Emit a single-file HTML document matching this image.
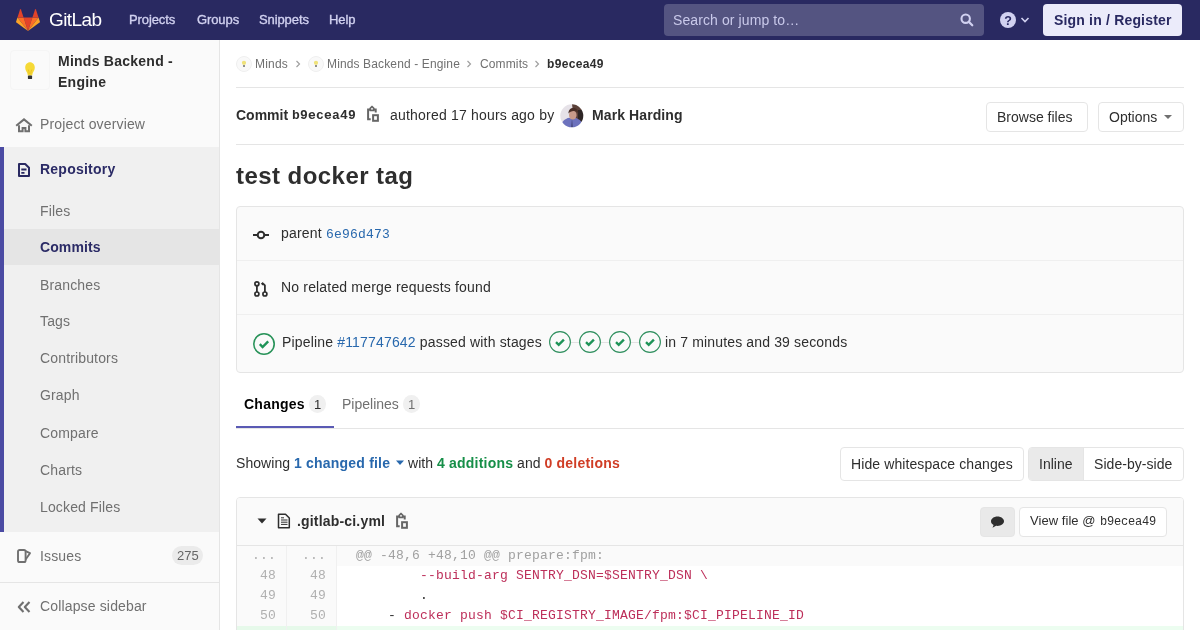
<!DOCTYPE html>
<html><head><meta charset="utf-8">
<style>
*{box-sizing:border-box;margin:0;padding:0}
html,body{width:1200px;height:630px;overflow:hidden;background:#fff;-webkit-font-smoothing:antialiased;font-family:"Liberation Sans",sans-serif;font-size:14px;color:#2e2e2e}
.t{position:absolute;white-space:nowrap;line-height:16px}
.mono{font-family:"Liberation Mono",monospace}
.b{font-weight:bold}
#nav{position:absolute;left:0;top:0;width:1200px;height:40px;background:#292961}
#side{position:absolute;left:0;top:40px;width:220px;height:590px;background:#fafafa;border-right:1px solid #e5e5e5}
#repo{position:absolute;left:0;top:107px;width:219px;height:385px;background:#f0f0f0;border-left:4px solid #4b4ba3}
.s-item{position:absolute;left:40px;font-size:14px;line-height:16px;color:#707070;white-space:nowrap;letter-spacing:0.15px}
.btn{position:absolute;border:1px solid #e5e5e5;border-radius:4px;background:#fff}
.box{position:absolute;border:1px solid #e5e5e5;border-radius:4px;background:#fafafa}
.hr{position:absolute;height:1px;background:#e5e5e5}
.ln{position:absolute;width:50px;text-align:right;padding-right:10px;font-family:"Liberation Mono",monospace;font-size:13px;line-height:20px;color:#b0b0b0;letter-spacing:0.2px}
.code{position:absolute;font-family:"Liberation Mono",monospace;font-size:13px;line-height:20px;white-space:pre;letter-spacing:0.2px}
</style></head><body><div id="root" style="position:absolute;left:0;top:0;width:1200px;height:630px;will-change:transform;opacity:0.999">
<!-- NAVBAR -->
<div id="nav">
  <svg style="position:absolute;left:16px;top:9px" width="24" height="22" viewBox="0 0 36 33">
    <path fill="#e24329" d="M18 33 24.6 12.7H11.4z"/>
    <path fill="#fc6d26" d="M18 33 11.4 12.7H2.2z"/>
    <path fill="#fca326" d="M2.2 12.7.2 18.9a1.4 1.4 0 0 0 .5 1.5L18 33z"/>
    <path fill="#e24329" d="M2.2 12.7h9.2L7.4.6a.7.7 0 0 0-1.3 0z"/>
    <path fill="#fc6d26" d="M18 33 24.6 12.7h9.2z"/>
    <path fill="#fca326" d="M33.8 12.7l2 6.2a1.4 1.4 0 0 1-.5 1.5L18 33z"/>
    <path fill="#e24329" d="M33.8 12.7h-9.2L28.6.6a.7.7 0 0 1 1.3 0z"/>
  </svg>
  <div class="t" style="left:49px;top:7.5px;font-size:19px;line-height:24px;color:#fff;letter-spacing:-0.6px">GitLab</div>
  <div class="t" style="left:129px;top:12px;font-size:13px;line-height:16px;color:#d1d1f0;-webkit-text-stroke:0.35px #d1d1f0;letter-spacing:-0.1px">Projects</div>
  <div class="t" style="left:197px;top:12px;font-size:13px;line-height:16px;color:#d1d1f0;-webkit-text-stroke:0.35px #d1d1f0;letter-spacing:-0.1px">Groups</div>
  <div class="t" style="left:259px;top:12px;font-size:13px;line-height:16px;color:#d1d1f0;-webkit-text-stroke:0.35px #d1d1f0;letter-spacing:-0.1px">Snippets</div>
  <div class="t" style="left:329px;top:12px;font-size:13px;line-height:16px;color:#d1d1f0;-webkit-text-stroke:0.35px #d1d1f0;letter-spacing:-0.1px">Help</div>
  <div style="position:absolute;left:664px;top:4px;width:320px;height:32px;border-radius:4px;background:#545481">
    <div class="t" style="left:9px;top:8px;color:#c9c9ea;letter-spacing:0.1px">Search or jump to…</div>
    <svg style="position:absolute;left:296px;top:9px" width="14" height="14" viewBox="0 0 16 16"><circle cx="6.5" cy="6.5" r="4.8" fill="none" stroke="#d1d1f0" stroke-width="2.4"/><path d="M10 10l4 4" stroke="#d1d1f0" stroke-width="2.6" stroke-linecap="round"/></svg>
  </div>
  <svg style="position:absolute;left:1000px;top:12px" width="16" height="16" viewBox="0 0 16 16"><circle cx="8" cy="8" r="8" fill="#d1d1f0"/><text x="8" y="12.6" font-size="12.5" font-weight="bold" text-anchor="middle" fill="#292961" font-family="Liberation Sans">?</text></svg>
  <svg style="position:absolute;left:1020px;top:16px" width="10" height="8" viewBox="0 0 10 8"><path d="M1.5 2l3.5 3.5L8.5 2" fill="none" stroke="#d1d1f0" stroke-width="1.6"/></svg>
  <div style="position:absolute;left:1043px;top:4px;width:139px;height:32px;border-radius:4px;background:#ebebfa"></div>
  <div class="t b" style="left:1054px;top:12px;color:#292961;letter-spacing:0.18px">Sign in / Register</div>
</div>

<!-- SIDEBAR -->
<div id="side">
  <div style="position:absolute;left:10px;top:10px;width:40px;height:40px;border:1px solid #f5f5f5;border-radius:4px;background:#fafafa"></div>
  <svg style="position:absolute;left:22px;top:21px" width="16" height="20" viewBox="0 0 16 20">
    <path d="M8 1.2C5.2 1.2 3.2 3.5 3.2 6.5c0 2.4 1.3 3.8 1.9 5.2.4.9.6 1.8.6 2.8h4.6c0-1 .2-1.9.6-2.8.6-1.4 1.9-2.8 1.9-5.2 0-3-2-5.3-4.8-5.3z" fill="#f6d936"/>
    <path d="M6.2 8.5c.6 1.5 1 2.8 1 4.5M9.8 8.5c-.6 1.5-1 2.8-1 4.5" fill="none" stroke="#e8b81e" stroke-width=".7"/>
    <rect x="5.9" y="14.5" width="4.2" height="3.6" rx=".9" fill="#333"/>
  </svg>
  <div class="t b" style="left:58px;top:10.5px;line-height:21px;color:#2e2e2e;letter-spacing:0.25px">Minds Backend -<br>Engine</div>

  <svg style="position:absolute;left:15px;top:78px" width="18" height="15" viewBox="0 0 18 15"><path d="M4 7.2V13.2h3.6V10h2.8v3.2H14V7.2" fill="none" stroke="#707070" stroke-width="2" stroke-linejoin="miter"/><path d="M1.2 7.8 9 1.4l7.8 6.4" fill="none" stroke="#707070" stroke-width="2" stroke-linejoin="miter"/></svg>
  <div class="s-item" style="top:76px">Project overview</div>

  <div id="repo"></div>
  <svg style="position:absolute;left:17px;top:123px" width="14" height="14" viewBox="0 0 14 14"><path d="M2 1h6.2L12 4.8V13H2z" fill="none" stroke="#292961" stroke-width="2" stroke-linejoin="round"/><path d="M4.3 6.5h5.2M4.3 9.8h3.2" stroke="#292961" stroke-width="1.8"/></svg>
  <div class="s-item b" style="top:120.5px;color:#2b2b66;letter-spacing:0.23px">Repository</div>
  <div style="position:absolute;left:4px;top:189px;width:215px;height:36px;background:#e5e5e5"></div>
  <div class="s-item" style="top:163px">Files</div>
  <div class="s-item b" style="top:198.5px;color:#2b2b66;letter-spacing:0.1px">Commits</div>
  <div class="s-item" style="top:236.5px">Branches</div>
  <div class="s-item" style="top:273px">Tags</div>
  <div class="s-item" style="top:310px">Contributors</div>
  <div class="s-item" style="top:347px">Graph</div>
  <div class="s-item" style="top:384.5px">Compare</div>
  <div class="s-item" style="top:422px">Charts</div>
  <div class="s-item" style="top:459px">Locked Files</div>

  <svg style="position:absolute;left:16px;top:509px" width="16" height="14" viewBox="0 0 16 14"><rect x="2" y="1" width="7.6" height="12" rx="1.6" fill="none" stroke="#707070" stroke-width="1.9"/><path d="M9.6 2.2 14 4.2 9.6 10.5" fill="none" stroke="#707070" stroke-width="1.9" stroke-linejoin="round"/></svg>
  <div class="s-item" style="top:508px">Issues</div>
  <div style="position:absolute;left:172px;top:506px;width:31px;height:19px;border-radius:10px;background:#ebebeb"></div>
  <div class="t" style="left:177px;top:508px;font-size:13px;line-height:15px;color:#666">275</div>

  <div class="hr" style="left:0;top:542px;width:219px"></div>
  <svg style="position:absolute;left:17px;top:561px" width="14" height="12" viewBox="0 0 14 12"><path d="M6.5 1 1.8 6l4.7 5M12.5 1 7.8 6l4.7 5" fill="none" stroke="#707070" stroke-width="2.1" stroke-linejoin="round"/></svg>
  <div class="s-item" style="top:558px">Collapse sidebar</div>
</div>

<!-- MAIN -->
<div id="main" style="position:absolute;left:0;top:0;width:1200px;height:630px">
  <!-- breadcrumbs -->
  <svg style="position:absolute;left:236px;top:56px" width="16" height="16" viewBox="0 0 16 16"><circle cx="8" cy="8" r="7.5" fill="#f9f9f9" stroke="#efefef" stroke-width="1"/><path d="M8 4.8c-1.3 0-2.1.9-2.1 2 0 .9.6 1.3.9 2h2.4c.3-.7.9-1.1.9-2 0-1.1-.8-2-2.1-2z" fill="#efe27a"/><rect x="7" y="9.2" width="2" height="1.6" fill="#777"/></svg>
  <div class="t" style="left:255px;top:57px;font-size:12px;line-height:14px;color:#707070;letter-spacing:0.2px">Minds</div>
  <svg style="position:absolute;left:295px;top:60px" width="6" height="8" viewBox="0 0 6 8"><path d="M1.5 1 4.5 4 1.5 7" fill="none" stroke="#a0a0a0" stroke-width="1.2"/></svg>
  <svg style="position:absolute;left:308px;top:56px" width="16" height="16" viewBox="0 0 16 16"><circle cx="8" cy="8" r="7.5" fill="#f9f9f9" stroke="#efefef" stroke-width="1"/><path d="M8 4.8c-1.3 0-2.1.9-2.1 2 0 .9.6 1.3.9 2h2.4c.3-.7.9-1.1.9-2 0-1.1-.8-2-2.1-2z" fill="#efe27a"/><rect x="7" y="9.2" width="2" height="1.6" fill="#777"/></svg>
  <div class="t" style="left:327px;top:57px;font-size:12px;line-height:14px;color:#707070;letter-spacing:0.13px">Minds Backend - Engine</div>
  <svg style="position:absolute;left:466px;top:60px" width="6" height="8" viewBox="0 0 6 8"><path d="M1.5 1 4.5 4 1.5 7" fill="none" stroke="#a0a0a0" stroke-width="1.2"/></svg>
  <div class="t" style="left:480px;top:57px;font-size:12px;line-height:14px;color:#707070;letter-spacing:0.13px">Commits</div>
  <svg style="position:absolute;left:534px;top:60px" width="6" height="8" viewBox="0 0 6 8"><path d="M1.5 1 4.5 4 1.5 7" fill="none" stroke="#a0a0a0" stroke-width="1.2"/></svg>
  <div class="t b" style="left:547px;top:57px;font-size:12px;line-height:14px;color:#2e2e2e;letter-spacing:0.35px">b9ecea49</div>
  <div class="hr" style="left:236px;top:87px;width:948px"></div>

  <!-- commit header -->
  <div class="t b" style="left:236px;top:107px">Commit</div>
  <div class="t b mono" style="left:292px;top:108px;font-size:13px;line-height:15px;letter-spacing:0.2px">b9ecea49</div>
  <svg style="position:absolute;left:362px;top:102px" width="22" height="24" viewBox="0 0 22 24"><path d="M8.7 17.3H6.1V7.6H8.2M11.8 7.6h1.9V10.4" fill="none" stroke="#666" stroke-width="2"/><path d="M8.2 8.4V6.3L10 4.5l1.8 1.8v2.1z" fill="none" stroke="#666" stroke-width="1.7" stroke-linejoin="round"/><rect x="11.1" y="13.2" width="4.8" height="5.6" fill="none" stroke="#666" stroke-width="2"/></svg>
  <div class="t" style="left:390px;top:107px;letter-spacing:0.2px">authored 17 hours ago by</div>
  <svg style="position:absolute;left:560px;top:104px" width="24" height="24" viewBox="0 0 24 24">
    <defs><clipPath id="av"><circle cx="11.8" cy="11.8" r="11.5"/></clipPath><filter id="bl" x="-10%" y="-10%" width="120%" height="120%"><feGaussianBlur stdDeviation="0.5"/></filter></defs>
    <g clip-path="url(#av)"><g filter="url(#bl)"><rect width="24" height="24" fill="#e6e2e8"/><path d="M12 0h12v24H15z" fill="#5a3f38"/><path d="M18 6h6v16h-6z" fill="#2e2628"/><ellipse cx="12" cy="22" rx="11" ry="8.5" fill="#6d72bd"/><path d="M12 14.5l.8 9.5h-1.6z" fill="#3c3f70"/><ellipse cx="12.8" cy="11" rx="3.8" ry="4.6" fill="#c79a8a"/><path d="M8.5 9.5c-.2-3.5 2-5.5 4.8-5.5 3 0 5 2 5 5.3-1-1.6-2.6-2.4-4.6-2.4-2.2 0-4 .9-5.2 2.6z" fill="#4a2f27"/></g></g>
  </svg>
  <div class="t b" style="left:592px;top:107px;letter-spacing:0.1px">Mark Harding</div>
  <div class="btn" style="left:986px;top:102px;width:102px;height:30px"></div>
  <div class="t" style="left:997px;top:109px">Browse files</div>
  <div class="btn" style="left:1098px;top:102px;width:86px;height:30px"></div>
  <div class="t" style="left:1109px;top:109px">Options</div>
  <svg style="position:absolute;left:1163px;top:114px" width="10" height="6" viewBox="0 0 10 6"><path d="M1 1h8L5 5z" fill="#707070"/></svg>
  <div class="hr" style="left:236px;top:144px;width:948px"></div>

  <!-- title -->
  <div class="t b" style="left:236px;top:162px;font-size:24px;line-height:28px;letter-spacing:0.45px">test docker tag</div>

  <!-- info box -->
  <div class="box" style="left:236px;top:206px;width:948px;height:167px"></div>
  <div class="hr" style="left:237px;top:260px;width:946px;background:#efefef"></div>
  <div class="hr" style="left:237px;top:314px;width:946px;background:#efefef"></div>
  <svg style="position:absolute;left:252px;top:228px" width="18" height="14" viewBox="0 0 18 14"><path d="M1 7h4.3M12.7 7H17" stroke="#2e2e2e" stroke-width="2"/><circle cx="9" cy="7" r="3.3" fill="none" stroke="#2e2e2e" stroke-width="2"/></svg>
  <div class="t" style="left:281px;top:225px;letter-spacing:0.2px">parent <span class="mono" style="font-size:13px;color:#2868ad;letter-spacing:0.2px">6e96d473</span></div>
  <svg style="position:absolute;left:248px;top:276px" width="26" height="26" viewBox="0 0 26 26"><circle cx="8.9" cy="7.8" r="2" fill="none" stroke="#2e2e2e" stroke-width="1.7"/><circle cx="8.9" cy="18" r="2" fill="none" stroke="#2e2e2e" stroke-width="1.7"/><circle cx="16.9" cy="18" r="2" fill="none" stroke="#2e2e2e" stroke-width="1.7"/><path d="M8.9 9.8v6.2M16.9 16V9.3L15.4 7.8H14" fill="none" stroke="#2e2e2e" stroke-width="1.8" stroke-linejoin="round"/><path d="M12.8 7.8l2.4-2v4z" fill="#2e2e2e"/></svg>
  <div class="t" style="left:281px;top:279px;letter-spacing:0.17px">No related merge requests found</div>
  <svg style="position:absolute;left:253px;top:333px" width="22" height="22" viewBox="0 0 22 22"><circle cx="11" cy="11" r="10.2" fill="none" stroke="#279258" stroke-width="1.6"/><path d="M6.8 11.2l2.8 2.8 5.6-5.6" fill="none" stroke="#1f9458" stroke-width="2.4"/></svg>
  <div class="t" style="left:282px;top:334px;letter-spacing:0.17px">Pipeline <span style="color:#2868ad">#117747642</span> passed with stages</div>
  <div style="position:absolute;left:568px;top:342px;width:74px;height:1px;background:#e2e2e2"></div>
  <svg style="position:absolute;left:549px;top:331px" width="22" height="22" viewBox="0 0 22 22"><circle cx="11" cy="11" r="10.4" fill="#fafafa" stroke="#2f8f5e" stroke-width="1.1"/><path d="M7 11.2l2.7 2.6 5.2-5.2" fill="none" stroke="#1f9458" stroke-width="2.4"/></svg>
  <svg style="position:absolute;left:579px;top:331px" width="22" height="22" viewBox="0 0 22 22"><circle cx="11" cy="11" r="10.4" fill="#fafafa" stroke="#2f8f5e" stroke-width="1.1"/><path d="M7 11.2l2.7 2.6 5.2-5.2" fill="none" stroke="#1f9458" stroke-width="2.4"/></svg>
  <svg style="position:absolute;left:609px;top:331px" width="22" height="22" viewBox="0 0 22 22"><circle cx="11" cy="11" r="10.4" fill="#fafafa" stroke="#2f8f5e" stroke-width="1.1"/><path d="M7 11.2l2.7 2.6 5.2-5.2" fill="none" stroke="#1f9458" stroke-width="2.4"/></svg>
  <svg style="position:absolute;left:639px;top:331px" width="22" height="22" viewBox="0 0 22 22"><circle cx="11" cy="11" r="10.4" fill="#fafafa" stroke="#2f8f5e" stroke-width="1.1"/><path d="M7 11.2l2.7 2.6 5.2-5.2" fill="none" stroke="#1f9458" stroke-width="2.4"/></svg>
  <div class="t" style="left:665px;top:334px;letter-spacing:0.15px">in 7 minutes and 39 seconds</div>

  <!-- tabs -->
  <div class="hr" style="left:236px;top:428px;width:948px"></div>
  <div style="position:absolute;left:236px;top:426px;width:98px;height:2px;background:#5a5ab4"></div>
  <div class="t b" style="left:244px;top:395.5px;color:#000;letter-spacing:0.25px">Changes</div>
  <div style="position:absolute;left:309px;top:395px;width:17px;height:18px;border-radius:9px;background:#f0f0f0"></div>
  <div class="t" style="left:314px;top:397px;font-size:13px;line-height:15px;color:#2e2e2e">1</div>
  <div class="t" style="left:342px;top:396px;color:#707070">Pipelines</div>
  <div style="position:absolute;left:403px;top:395px;width:17px;height:18px;border-radius:9px;background:#f0f0f0"></div>
  <div class="t" style="left:408px;top:397px;font-size:13px;line-height:15px;color:#707070">1</div>

  <!-- showing -->
  <div class="t" style="left:236px;top:455px;letter-spacing:0.05px">Showing <span class="b" style="color:#2868ad;letter-spacing:0.2px">1 changed file</span></div>
  <svg style="position:absolute;left:395px;top:460px" width="10" height="6" viewBox="0 0 10 6"><path d="M1 .5h8L5 5z" fill="#2868ad"/></svg>
  <div class="t" style="left:408px;top:455px;letter-spacing:0.05px">with <span class="b" style="color:#168f48;letter-spacing:0.2px">4 additions</span> and <span class="b" style="color:#d03d25;letter-spacing:0.2px">0 deletions</span></div>

  <div class="btn" style="left:840px;top:447px;width:184px;height:34px"></div>
  <div class="t" style="left:851px;top:456px;letter-spacing:0.1px">Hide whitespace changes</div>
  <div class="btn" style="left:1028px;top:447px;width:156px;height:34px;overflow:hidden"><div style="position:absolute;left:0;top:0;width:55px;height:34px;background:#eaeaea;border-right:1px solid #e5e5e5"></div></div>
  <div class="t" style="left:1039px;top:456px">Inline</div>
  <div class="t" style="left:1094px;top:456px;letter-spacing:0.05px">Side-by-side</div>

  <!-- file -->
  <div style="position:absolute;left:236px;top:497px;width:948px;height:140px;border:1px solid #e5e5e5;border-radius:4px 4px 0 0;background:#fff"></div>
  <div style="position:absolute;left:237px;top:498px;width:946px;height:48px;background:#fafafa;border-bottom:1px solid #e5e5e5;border-radius:3px 3px 0 0"></div>
  <svg style="position:absolute;left:257px;top:518px" width="10" height="6" viewBox="0 0 10 6"><path d="M.5.5h9L5 5.5z" fill="#2e2e2e"/></svg>
  <svg style="position:absolute;left:277px;top:513px" width="14" height="16" viewBox="0 0 14 16"><path d="M1.5 1.2h7l3.8 3.8v9.8H1.5z" fill="none" stroke="#2e2e2e" stroke-width="1.5" stroke-linejoin="round"/><path d="M4 7h6.5M4 9.2h6.5M4 11.4h6.5M4 4.8h3" stroke="#2e2e2e" stroke-width="1"/></svg>
  <div class="t b" style="left:297px;top:513px;letter-spacing:0.18px">.gitlab-ci.yml</div>
  <svg style="position:absolute;left:391px;top:509px" width="22" height="24" viewBox="0 0 22 24"><path d="M8.7 17.3H6.1V7.6H8.2M11.8 7.6h1.9V10.4" fill="none" stroke="#666" stroke-width="2"/><path d="M8.2 8.4V6.3L10 4.5l1.8 1.8v2.1z" fill="none" stroke="#666" stroke-width="1.7" stroke-linejoin="round"/><rect x="11.1" y="13.2" width="4.8" height="5.6" fill="none" stroke="#666" stroke-width="2"/></svg>
  <div style="position:absolute;left:980px;top:507px;width:35px;height:30px;border-radius:4px;background:#e9e9e9;border:1px solid #e5e5e5"></div>
  <svg style="position:absolute;left:990px;top:515px" width="15" height="14" viewBox="0 0 15 14"><path d="M7.5 1.5C3.8 1.5 1 3.7 1 6.3c0 1.6 1 3 2.6 3.8L2.5 12.8l3.6-2c.5.1.9.1 1.4.1 3.7 0 6.5-2.1 6.5-4.6S11.2 1.5 7.5 1.5z" fill="#2e2e2e"/></svg>
  <div class="btn" style="left:1019px;top:507px;width:148px;height:30px"></div>
  <div class="t" style="left:1030px;top:512.5px;font-size:13px;line-height:15px;letter-spacing:0.05px">View file @ <span class="mono" style="font-size:12px;letter-spacing:-0.2px;margin-left:0.7px">b9ecea49</span></div>

  <!-- diff -->
  <div style="position:absolute;left:237px;top:546px;width:100px;height:85px;background:#fafafa"></div>
  <div style="position:absolute;left:286px;top:546px;width:1px;height:85px;background:#f0f0f0;z-index:1"></div>
  <div style="position:absolute;left:336px;top:546px;width:1px;height:85px;background:#f0f0f0;z-index:1"></div>
  <div style="position:absolute;left:337px;top:546px;width:846px;height:20px;background:#fafafa"></div>
  <div style="position:absolute;left:237px;top:626px;width:946px;height:10px;background:#ecfdf0"></div>
  <div style="position:absolute;left:237px;top:626px;width:100px;height:10px;background:#e6f9ea"></div>
  <div class="ln" style="left:236px;top:546px">...</div>
  <div class="ln" style="left:286px;top:546px">...</div>
  <div class="ln" style="left:236px;top:566px">48</div>
  <div class="ln" style="left:286px;top:566px">48</div>
  <div class="ln" style="left:236px;top:586px">49</div>
  <div class="ln" style="left:286px;top:586px">49</div>
  <div class="ln" style="left:236px;top:606px">50</div>
  <div class="ln" style="left:286px;top:606px">50</div>
  <div class="code" style="left:348px;top:546px;color:#a0a0a0"> @@ -48,6 +48,10 @@ prepare:fpm:</div>
  <div class="code" style="left:348px;top:566px;color:#2e2e2e">         <span style="color:#bd2f5a">--build-arg SENTRY_DSN=$SENTRY_DSN \</span></div>
  <div class="code" style="left:348px;top:586px;color:#2e2e2e">         .</div>
  <div class="code" style="left:348px;top:606px;color:#2e2e2e">     - <span style="color:#bd2f5a">docker push $CI_REGISTRY_IMAGE/fpm:$CI_PIPELINE_ID</span></div>
</div>
</div></body></html>
